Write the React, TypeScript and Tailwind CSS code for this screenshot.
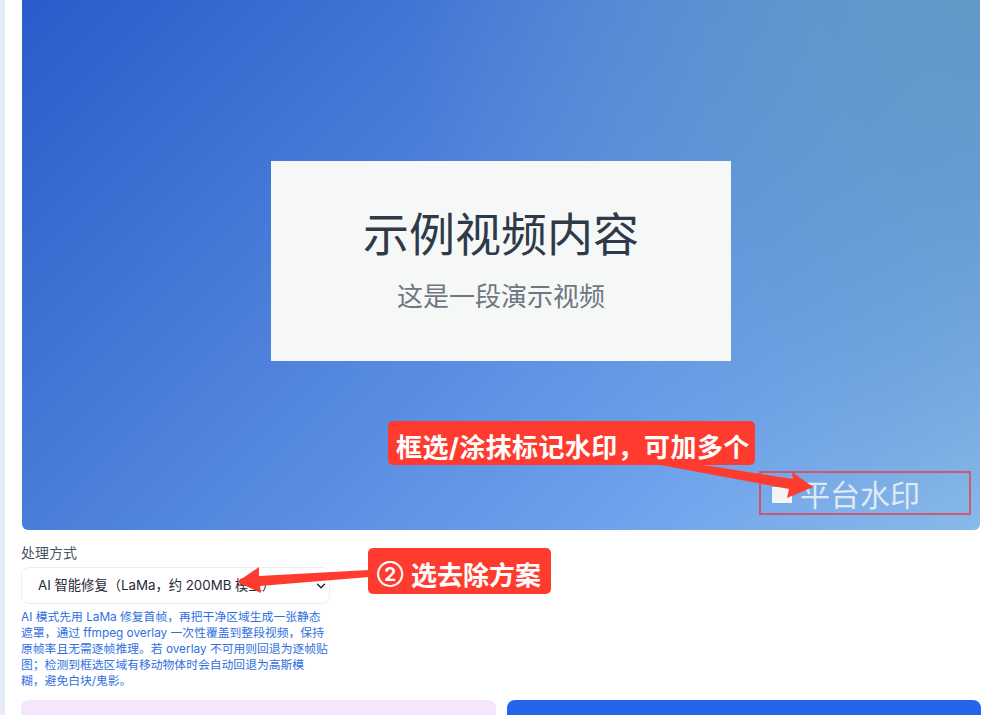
import React from "react";
import { ChevronDown } from "lucide-react";

const cjk = "font-['Inter','Noto_Sans_CJK_SC',sans-serif]";

export default function App(): React.JSX.Element {
  return (
    <div className={`relative flex w-[990px] h-[715px] overflow-hidden bg-white ${cjk}`}>
      <div className="w-[5px] shrink-0 bg-[#e6ebf9]" />

      <div className="min-w-0 flex-1 pl-[16px] pr-[9px]">
        {/* video preview */}
        <div className="relative mx-px flex h-[530px] items-center justify-center rounded-b-[6px] bg-[radial-gradient(circle_at_top_right,#6399c6_0%,transparent_52%),linear-gradient(135deg,#2a5bc9,#6ea2ec_75%,#8cbcec)] pb-[8px]">
          <div className="flex h-[200px] w-[460px] flex-col items-center bg-[#f6f8f8] pt-[40px]">
            <div className="text-[46px] leading-[66px] text-[#2f3a48]">示例视频内容</div>
            <div className="mt-[11px] text-[26px] leading-[38px] text-[#6f7780]">这是一段演示视频</div>
          </div>
          <div className="absolute left-[750px] top-[473px] flex items-center text-[30px] leading-[44px] text-[#dfe9f2]">
            <span className="mr-[8px] h-[16px] w-[20px] bg-[#f3f5f5]" />
            平台水印
          </div>
        </div>

        {/* method select */}
        <div className="mt-[14px] w-[309px]">
          <label className="block text-[14px] leading-[18px] text-[#4b5563]">处理方式</label>
          <div className="mt-[5px] flex h-[37px] items-center justify-between rounded-[8px] border border-[#eceef2] pl-[16px] pr-px text-[13.3px] text-[#1f2937]">
            <span>AI 智能修复（LaMa，约 200MB 模型）</span>
            <ChevronDown className="h-[14px] w-[14px] text-[#1f2937]" strokeWidth={2.5} />
          </div>
          <p className="mt-[5px] text-[11.8px] leading-[16px] text-[#2f6fe0]">
            AI 模式先用 LaMa 修复首帧，再把干净区域生成一张静态遮罩，通过 ffmpeg overlay 一次性覆盖到整段视频，保持原帧率且无需逐帧推理。若 overlay 不可用则回退为逐帧贴图；检测到框选区域有移动物体时会自动回退为高斯模
            <br />
            糊，避免白块/鬼影。
          </p>
        </div>

        {/* actions */}
        <div className="mt-[11px] flex gap-[11px]">
          <button className="flex h-[44px] flex-1 justify-center rounded-[8px] bg-[#f4e6fd] pt-[12px] text-[14px] font-medium text-[#9333ea]">
            提交处理
          </button>
          <button className="flex h-[44px] flex-1 justify-center rounded-[8px] bg-[#2563eb] pt-[12px] text-[14px] font-medium text-white">
            开始去除
          </button>
        </div>
      </div>

      {/* annotations */}
      <div className="absolute left-[759px] top-[471px] h-[44px] w-[212px] border-2 border-[#e0444f]/80" />
      <svg className="absolute left-0 top-0 pointer-events-none" width="990" height="715" viewBox="0 0 990 715">
        <path d="M697 464 L793 479 L792 472 L813 487 L787 498 L789 489 L655 464 Z" fill="#ff3b30" />
        <path d="M369 570 L259 576 L259 567 L237 582 L261 593 L260 586 L369 577 Z" fill="#ff3b30" />
      </svg>
      <div className="absolute left-[388px] top-[421px] flex h-[44px] items-center rounded-[5px] bg-[#ff3b30] pl-[8px] pr-[5px] pt-[8px] text-[26px] font-bold tracking-[0.4px] text-white">
        框选/涂抹标记水印，可加多个
      </div>
      <div className="absolute left-[368px] top-[548px] flex h-[46px] items-center gap-[9px] rounded-[5px] bg-[#ff3b30] pl-[9px] pr-[10px] pt-[8px] text-[26px] font-bold text-white">
        <span className="w-[25px] text-center text-[19px]">②</span>
        <span>选去除方案</span>
      </div>
    </div>
  );
}
